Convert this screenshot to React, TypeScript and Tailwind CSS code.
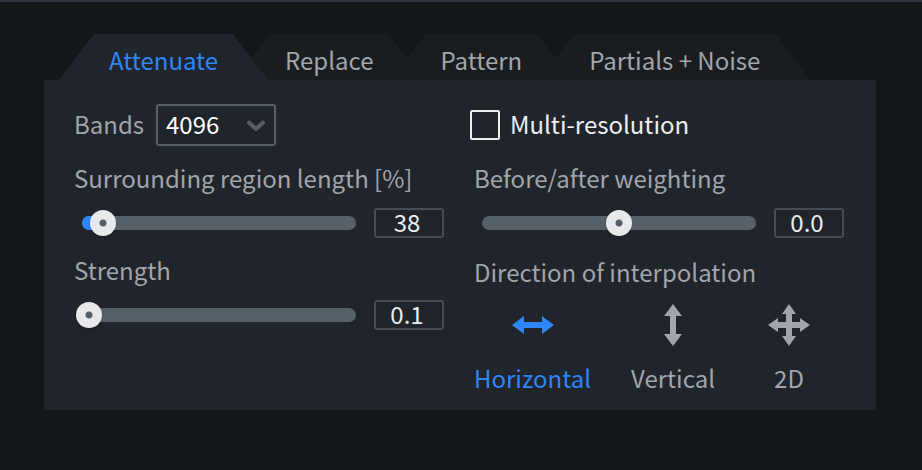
import { useState } from "react";
import type { ReactNode } from "react";

const tabs = ["Attenuate", "Replace", "Pattern", "Partials + Noise"];

type SliderProps = {
  id: string;
  label: string;
  min: number;
  max: number;
  step: number;
  initial: number;
  digits?: number;
  filled?: boolean;
};

const Slider = ({
  id,
  label,
  min,
  max,
  step,
  initial,
  digits = 0,
  filled = false,
}: SliderProps) => {
  const [value, setValue] = useState(initial);
  const ratio = (value - min) / (max - min);

  return (
    <div className="mt-4">
      <label htmlFor={id} className="block h-9 leading-8">
        {label}
      </label>
      <div className="mt-2.5 flex items-center gap-3 pl-0.5">
        <div className="grid flex-1 items-center">
          <div className="mx-1.5 h-3.5 overflow-hidden rounded-full bg-[#566068] [grid-area:1/1]">
            {filled && (
              <div
                className="h-full bg-[#2f86f9]"
                style={{ width: `calc(7px + (100% - 14px) * ${ratio})` }}
              />
            )}
          </div>
          <input
            id={id}
            type="range"
            min={min}
            max={max}
            step={step}
            value={value}
            onChange={(e) => setValue(Number(e.target.value))}
            className="z-10 h-[26px] w-full cursor-pointer appearance-none bg-transparent [grid-area:1/1] [&::-webkit-slider-thumb]:size-[26px] [&::-webkit-slider-thumb]:appearance-none [&::-webkit-slider-thumb]:rounded-full [&::-webkit-slider-thumb]:bg-[radial-gradient(circle,#566068_3px,#e8e9ea_4px)] [&::-webkit-slider-thumb]:shadow"
          />
        </div>
        <input
          type="text"
          aria-label={`${label} value`}
          value={value.toFixed(digits)}
          readOnly
          className="h-[30px] w-[70px] rounded-[3px] border-2 border-[#454c54] bg-transparent pr-1 pb-0.5 text-center text-[#eceef0]"
        />
      </div>
    </div>
  );
};

type DirectionProps = {
  name: string;
  checked: boolean;
  onSelect: () => void;
  children: ReactNode;
};

const Direction = ({ name, checked, onSelect, children }: DirectionProps) => (
  <label
    className={`flex min-w-[68px] cursor-pointer flex-col items-center gap-4 ${
      checked ? "text-[#2f86f9]" : "text-[#a1a5ac]"
    }`}
  >
    <input
      type="radio"
      name="direction"
      checked={checked}
      onChange={onSelect}
      className="sr-only"
    />
    <svg viewBox="0 0 42 42" className="size-[42px]" fill="currentColor">
      {children}
    </svg>
    <span className="h-9 leading-8">{name}</span>
  </label>
);

const App = () => {
  const [tab, setTab] = useState("Attenuate");
  const [direction, setDirection] = useState("Horizontal");

  return (
    <main className="min-h-screen border-t-2 border-[#2f3841] bg-[#131719] pt-8 pr-[46px] pl-11 font-['Noto_Sans_CJK_SC',sans-serif] text-[24px] text-[#a1a5ac]">
      <div role="tablist" className="flex pl-[15px]">
        {tabs.map((name) => (
          <button
            key={name}
            type="button"
            role="tab"
            aria-selected={tab === name}
            onClick={() => setTab(name)}
            className={`-mr-[33px] h-[46px] px-[50px] pt-1.5 leading-9 whitespace-nowrap [clip-path:polygon(35px_0,calc(100%-35px)_0,100%_100%,0_100%)] ${
              tab === name
                ? "z-10 bg-[#20242b] text-[#2f86f9]"
                : "bg-[#191d20]"
            }`}
          >
            {name}
          </button>
        ))}
      </div>

      <section className="flex gap-[30px] rounded-[3px] bg-[#20242b] pt-6 pr-8 pb-3 pl-[30px]">
        <div className="flex-1">
          <div className="flex h-[42px] items-center gap-3">
            <label htmlFor="bands" className="pb-0.5">
              Bands
            </label>
            <div className="grid w-[120px] items-center">
              <select
                id="bands"
                defaultValue="4096"
                className="h-[42px] appearance-none rounded-[3px] border-2 border-[#566068] bg-transparent pb-0.5 pl-2 text-white [grid-area:1/1]"
              >
                <option>1024</option>
                <option>2048</option>
                <option>4096</option>
                <option>8192</option>
              </select>
              <svg
                viewBox="0 0 18 12"
                className="pointer-events-none mr-[11px] h-3 w-[18px] justify-self-end [grid-area:1/1]"
                fill="none"
                stroke="#566068"
                strokeWidth="4"
                strokeLinecap="round"
                strokeLinejoin="round"
              >
                <path d="M2 3.5 9 10 16 3.5" />
              </svg>
            </div>
          </div>
          <Slider
            id="region"
            label="Surrounding region length [%]"
            min={0}
            max={730}
            step={1}
            initial={38}
            filled
          />
          <Slider
            id="strength"
            label="Strength"
            min={0.1}
            max={10}
            step={0.1}
            initial={0.1}
            digits={1}
          />
        </div>

        <div className="flex-1">
          <label className="-ml-1 flex h-[42px] items-center gap-2.5 text-[#eceef0]">
            <input
              type="checkbox"
              className="size-[30px] appearance-none rounded-[2px] border-2 border-[#eceef0] checked:bg-[#2f86f9]"
            />
            <span className="pb-0.5">Multi-resolution</span>
          </label>
          <Slider
            id="weighting"
            label="Before/after weighting"
            min={-10}
            max={10}
            step={0.1}
            initial={0}
            digits={1}
          />
          <fieldset className="mt-[18px]">
            <legend className="h-9 leading-8">Direction of interpolation</legend>
            <div className="mt-3 flex gap-10">
              <Direction
                name="Horizontal"
                checked={direction === "Horizontal"}
                onSelect={() => setDirection("Horizontal")}
              >
                <path d="M0 21 12 12v6h18v-6l12 9-12 9v-6H12v6z" />
              </Direction>
              <Direction
                name="Vertical"
                checked={direction === "Vertical"}
                onSelect={() => setDirection("Vertical")}
              >
                <path d="M21 0 30 12h-6v18h6l-9 12-9-12h6V12h-6z" />
              </Direction>
              <Direction
                name="2D"
                checked={direction === "2D"}
                onSelect={() => setDirection("2D")}
              >
                <path d="M21 0 28 10h-4v8h8v-4l10 7-10 7v-4h-8v8h4l-7 10-7-10h4v-8h-8v4L0 21l10-7v4h8v-8h-4z" />
              </Direction>
            </div>
          </fieldset>
        </div>
      </section>
    </main>
  );
};

export default App;
